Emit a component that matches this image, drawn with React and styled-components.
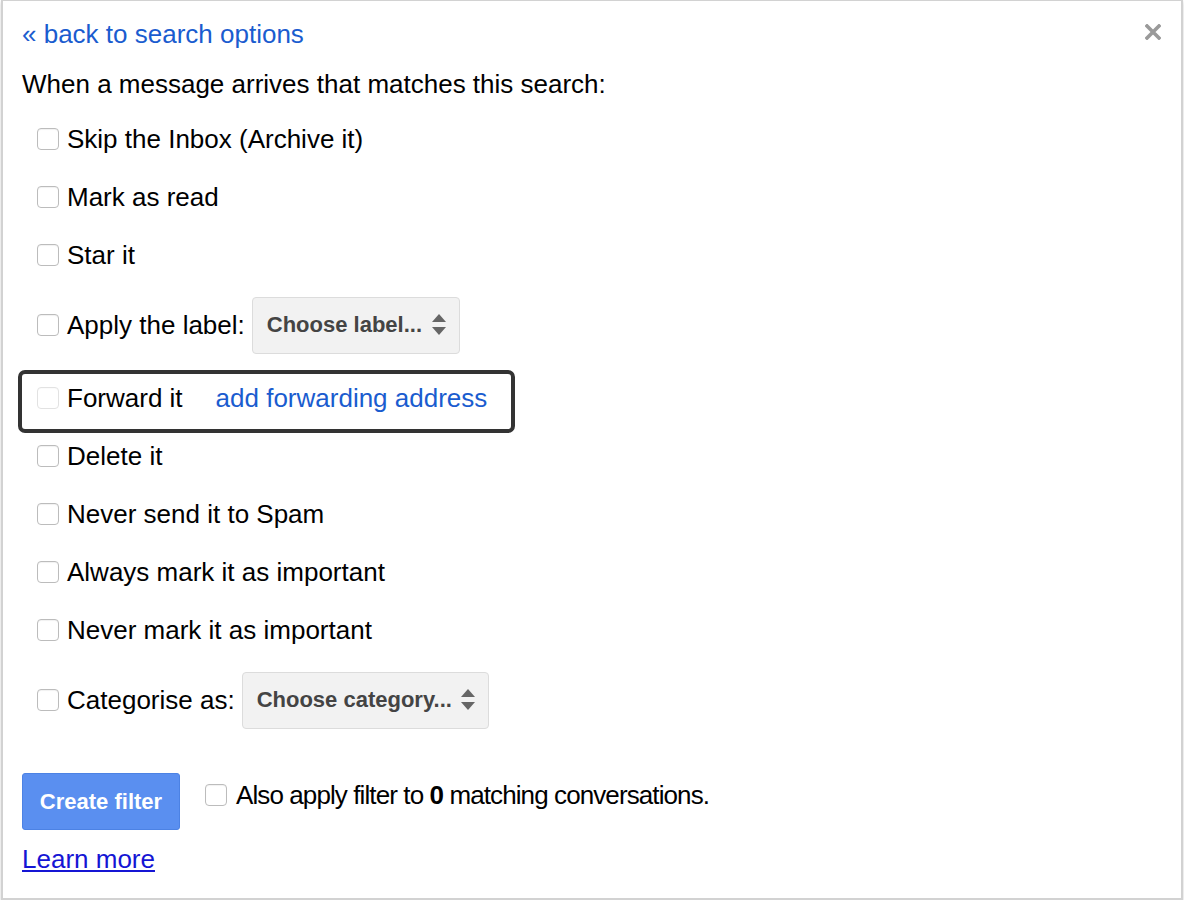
import React from "react";
import styled, { createGlobalStyle } from "styled-components";

const Global = createGlobalStyle`
  html, body { margin: 0; padding: 0; background: #ffffff; }
  body { font-family: "Liberation Sans", Arial, sans-serif; color: #000; }
`;

const Panel = styled.div`
  box-sizing: border-box;
  margin-left: 1px;
  width: 1182px;
  height: 900px;
  border: 2px solid #d2d2d2;
  border-top-width: 1px;
  box-shadow: 0 2px 4px rgba(0, 0, 0, 0.18);
  background: #fff;
  position: relative;
  padding: 18px 20px 0 19px;
  display: flex;
  flex-direction: column;
`;

const Close = styled.button`
  position: absolute;
  top: 20px;
  right: 17px;
  width: 22px;
  height: 22px;
  padding: 0;
  border: 0;
  background: none;
  display: flex;
  align-items: center;
  justify-content: center;
  cursor: pointer;
`;

const Link = styled.a`
  color: #1a5ccf;
  text-decoration: none;
  font-size: 26px;
  line-height: 30px;
  cursor: pointer;
`;

const Intro = styled.div`
  font-size: 26px;
  line-height: 30px;
  margin-top: 20px;
`;

const List = styled.div`
  display: flex;
  flex-direction: column;
  margin-top: 11px;
`;

const Row = styled.label`
  display: flex;
  align-items: center;
  height: ${(p) => p.$h || 58}px;
  padding-left: 15px;
  font-size: 26px;
  gap: 8px;
`;

const HighlightRow = styled.div`
  box-sizing: border-box;
  display: flex;
  align-items: center;
  height: 63px;
  width: 497px;
  margin: 4px 0 -6px -4px;
  border: 4px solid #333333;
  border-radius: 7px;
  padding: 0 0 7px 15px;
  font-size: 26px;
  gap: 8px;
`;

const Box = styled.span`
  box-sizing: border-box;
  flex: none;
  width: 22px;
  height: 22px;
  border: 1px solid ${(p) => (p.$disabled ? "#e2e2e2" : "#bcbcbc")};
  border-radius: 4px;
  background: #fff;
  box-shadow: inset 0 1px 1px rgba(0, 0, 0, ${(p) => (p.$disabled ? 0.02 : 0.06)});
`;

const Text = styled.span`
  white-space: nowrap;
`;

const ForwardLink = styled(Link)`
  margin-left: 25px;
`;

const Select = styled.div`
  box-sizing: border-box;
  display: flex;
  align-items: center;
  justify-content: space-between;
  height: 57px;
  width: ${(p) => p.$w}px;
  margin-left: -1px;
  padding: 0 13px 0 14px;
  background: #f2f2f2;
  border: 1px solid #dcdcdc;
  border-radius: 4px;
  font-size: 22px;
  font-weight: bold;
  color: #444;
  white-space: nowrap;
`;

const Footer = styled.div`
  display: flex;
  align-items: flex-start;
  margin-top: 32px;
  gap: 25px;
`;

const Button = styled.button`
  box-sizing: border-box;
  width: 158px;
  height: 57px;
  background: #5a8ff0;
  border: 1px solid #4c82e4;
  border-radius: 3px;
  color: #fff;
  font-family: "Liberation Sans", Arial, sans-serif;
  font-weight: bold;
  font-size: 22px;
  padding: 0;
  cursor: pointer;
`;

const ApplyAll = styled.label`
  display: flex;
  align-items: center;
  gap: 9px;
  margin-top: 7px;
  height: 30px;
  font-size: 26px;
  letter-spacing: -0.9px;
  white-space: nowrap;
`;

const Learn = styled.a`
  color: #1515d4;
  text-decoration: underline;
  font-size: 26px;
  line-height: 30px;
  margin-top: 14px;
  align-self: flex-start;
  cursor: pointer;
`;

const Arrows = () => (
  <svg width="14" height="22" viewBox="0 0 14 22">
    <polygon points="7,0 14,8 0,8" fill="#666" />
    <polygon points="0,13 14,13 7,21" fill="#666" />
  </svg>
);

const X = () => (
  <svg width="16" height="16" viewBox="0 0 16 16">
    <path d="M2 2 L14 14 M14 2 L2 14" stroke="#9a9a9a" strokeWidth="3.6" strokeLinecap="square" />
  </svg>
);

const simple = ["Skip the Inbox (Archive it)", "Mark as read", "Star it"];
const more = ["Delete it", "Never send it to Spam", "Always mark it as important", "Never mark it as important"];

export default function App() {
  return (
    <>
      <Global />
      <Panel>
        <Close aria-label="Close">
          <X />
        </Close>
        <div>
          <Link>« back to search options</Link>
        </div>
        <Intro>When a message arrives that matches this search:</Intro>
        <List>
          {simple.map((t) => (
            <Row key={t}>
              <Box />
              <Text>{t}</Text>
            </Row>
          ))}
          <Row $h={82}>
            <Box />
            <Text>Apply the label:</Text>
            <Select $w={208}>
              <span>Choose label...</span>
              <Arrows />
            </Select>
          </Row>
          <HighlightRow>
            <Box $disabled />
            <Text>Forward it</Text>
            <ForwardLink>add forwarding address</ForwardLink>
          </HighlightRow>
          {more.map((t) => (
            <Row key={t}>
              <Box />
              <Text>{t}</Text>
            </Row>
          ))}
          <Row $h={82}>
            <Box />
            <Text>Categorise as:</Text>
            <Select $w={247}>
              <span>Choose category...</span>
              <Arrows />
            </Select>
          </Row>
        </List>
        <Footer>
          <Button>Create filter</Button>
          <ApplyAll>
            <Box />
            <Text>
              Also apply filter to <b>0</b> matching conversations.
            </Text>
          </ApplyAll>
        </Footer>
        <Learn>Learn more</Learn>
      </Panel>
    </>
  );
}
